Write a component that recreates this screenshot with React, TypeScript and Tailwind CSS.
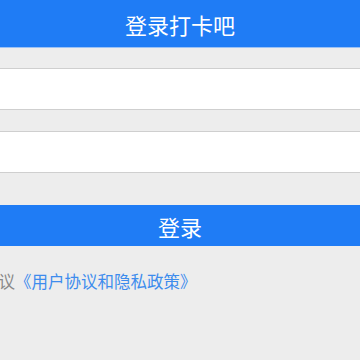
export default function App() {
  return (
    <div
      className="min-h-[360px] w-[360px] overflow-hidden bg-[#ededed]"
      style={{ fontFamily: '"Noto Sans CJK SC", "Noto Sans", sans-serif' }}
    >
      <header className="flex h-[48px] items-center justify-center border-b border-[#9cc2f5] bg-[#1f7cf5]">
        <h1 className="text-[22px] leading-none text-white">登录打卡吧</h1>
      </header>

      <div className="mt-[20px] flex flex-col gap-[21px]">
        <input
          type="text"
          className="h-[42px] w-full border-y border-[#cfcfcf] bg-white px-3 text-[16px] outline-none"
        />
        <input
          type="password"
          className="h-[42px] w-full border-y border-[#cfcfcf] bg-white px-3 text-[16px] outline-none"
        />
      </div>

      <button
        type="button"
        className="mt-[32px] flex h-[41px] w-full items-center justify-center bg-[#1f7cf5] text-[22px] leading-none text-white"
      >
        登录
      </button>

      <p className="-ml-[18px] mt-[25px] whitespace-nowrap text-[16.5px] leading-[20px] text-[#888888]">
        协议<span className="text-[#3d8ced]">《用户协议和隐私政策》</span>
      </p>
    </div>
  );
}
